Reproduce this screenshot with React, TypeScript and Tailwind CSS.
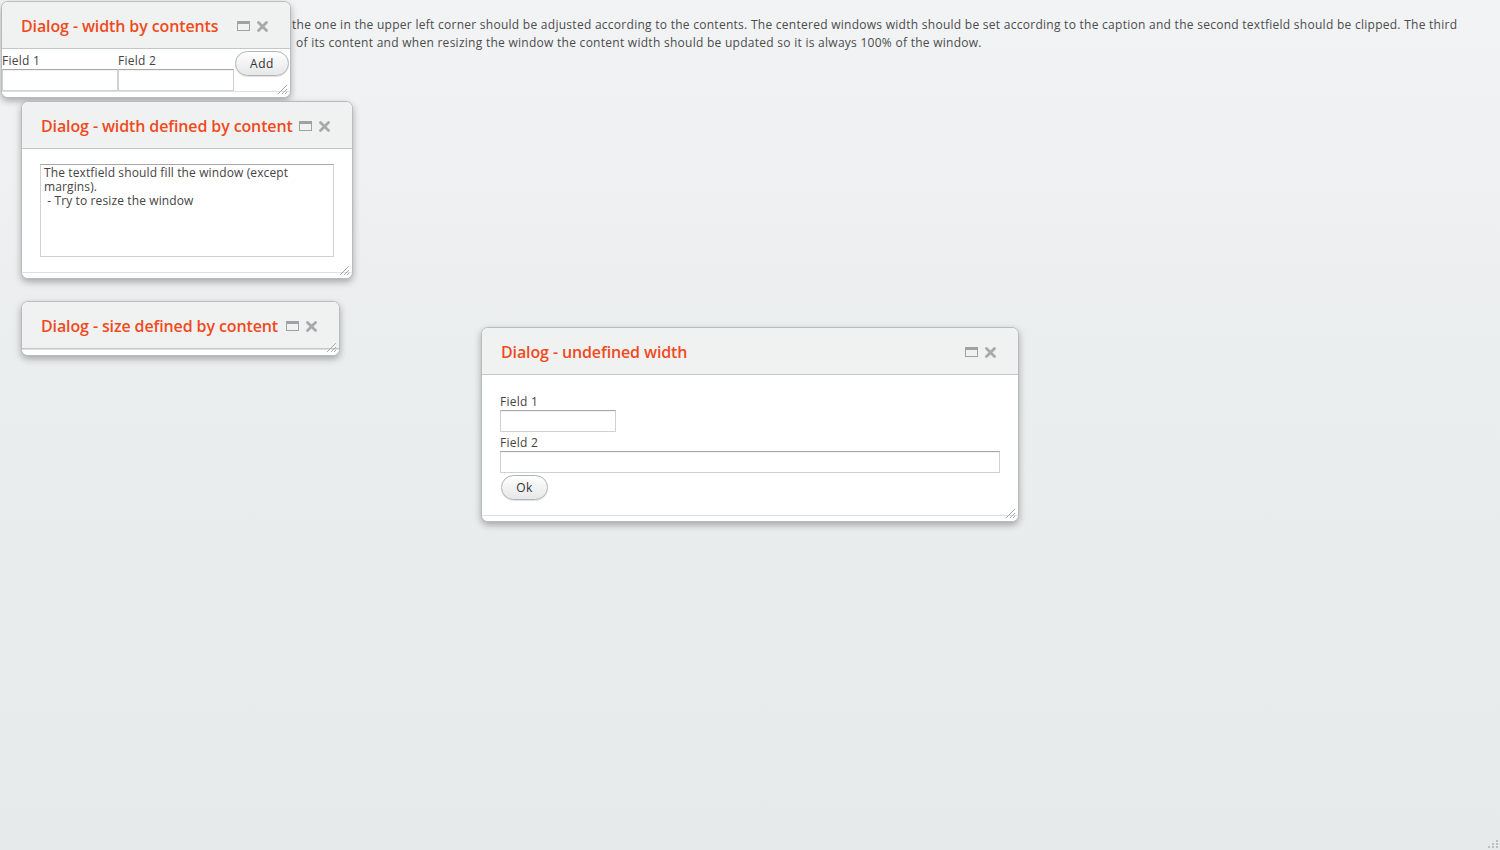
import React from "react";

const FONT = { fontFamily: '"Open Sans", "DejaVu Sans", sans-serif' };

function MaxIcon() {
  return (
    <svg width="13" height="10" viewBox="0 0 13 10" className="block">
      <rect x="0.5" y="0.5" width="12" height="9" fill="none" stroke="#9ea2a4" />
      <rect x="0" y="0" width="13" height="3" fill="#9ea2a4" />
    </svg>
  );
}

function CloseIcon() {
  return (
    <svg width="11" height="11" viewBox="0 0 11 11" className="block">
      <path d="M1.5 1.5 L9.5 9.5 M9.5 1.5 L1.5 9.5" stroke="#a6aaab" strokeWidth="2.8" strokeLinecap="round" />
    </svg>
  );
}

function ResizeHandle() {
  return (
    <svg width="11" height="11" viewBox="0 0 11 11" className="absolute right-[2px] bottom-[2px]">
      <path d="M10 1 L1 10 M10 5 L5 10 M10 8 L8 10" stroke="#a9adae" strokeWidth="1" />
    </svg>
  );
}

function Win({
  x,
  y,
  w,
  caption,
  children,
}: {
  x: number;
  y: number;
  w: number;
  caption: string;
  children?: React.ReactNode;
}) {
  return (
    <div
      className="absolute rounded-[7px] border border-[#b7bcbd] bg-white shadow-[0_3px_7px_rgba(0,0,0,0.3)] overflow-hidden"
      style={{ left: x, top: y, width: w }}
    >
      <div className="h-[47px] bg-[#f0f2f2] border-b border-[#c2c7c8] flex items-center pl-[19px] pr-[22px] pt-[2px]">
        <div className="flex-1 text-[16px] text-[#f04a1c] font-semibold whitespace-nowrap tracking-[-0.12px]">
          {caption}
        </div>
        <div className="flex items-center gap-[7px] pl-[6px]">
          <MaxIcon />
          <CloseIcon />
        </div>
      </div>
      {children}
      <div className="relative h-[6px] border-t border-[#dde0e1] bg-white">
        <ResizeHandle />
      </div>
    </div>
  );
}

const inputCls =
  "h-[22px] border border-[#cfd1d2] border-t-[#a6a8a9] bg-white shadow-[inset_0_1px_1px_rgba(0,0,0,0.06)]";

function Btn({ label, w }: { label: string; w: number }) {
  return (
    <div
      className="h-[25px] rounded-full border border-[#b0b3b4] bg-gradient-to-b from-white to-[#e6e7e8] flex items-center justify-center text-[12px] text-[#333] tracking-[0.5px] shadow-[0_1px_1px_rgba(0,0,0,0.12)]"
      style={{ width: w }}
    >
      {label}
    </div>
  );
}

export default function App() {
  return (
    <div
      className="relative w-[1500px] h-[850px] overflow-hidden bg-gradient-to-b from-[#f2f3f4] via-[#ebeeef] via-40% to-[#e7eaeb] text-[#444] text-[12px] tracking-[0.27px]"
      style={FONT}
    >
      <div className="pt-[16px] pl-[292px] leading-[18px] text-[#4a4c4d]">
        <div className="whitespace-nowrap">
          the one in the upper left corner should be adjusted according to the contents. The centered windows width should be set according to the caption and the second textfield should be clipped. The third
        </div>
        <div className="whitespace-nowrap pl-[4px]">
          of its content and when resizing the window the content width should be updated so it is always 100% of the window.
        </div>
      </div>

      <Win x={1} y={1} w={290} caption="Dialog - width by contents">
        <div className="flex h-[42px]">
          <div className="flex flex-col w-[116px]">
            <div className="h-[20px] pt-[4px] leading-[16px]">Field 1</div>
            <div className={inputCls + " w-[116px]"} />
          </div>
          <div className="flex flex-col w-[116px]">
            <div className="h-[20px] pt-[4px] leading-[16px]">Field 2</div>
            <div className={inputCls + " w-[116px]"} />
          </div>
          <div className="pl-[1px] pt-[2px]">
            <Btn label="Add" w={54} />
          </div>
        </div>
      </Win>

      <Win x={21} y={101} w={332} caption="Dialog - width defined by content">
        <div className="px-[18px] pt-[15px] pb-[15px]">
          <div className="h-[93px] border border-[#cfd1d2] border-t-[#a6a8a9] px-[3px] pt-[1px] leading-[14px] text-[12px] text-[#444] tracking-[0.12px]">
            The textfield should fill the window (except margins).
            <br />
            &nbsp;- Try to resize the window
          </div>
        </div>
      </Win>

      <Win x={21} y={301} w={319} caption="Dialog - size defined by content" />

      <Win x={481} y={327} w={538} caption="Dialog - undefined width">
        <div className="px-[18px] pt-[19px] pb-[15px]">
          <div className="leading-[16px] h-[16px]">Field 1</div>
          <div className={inputCls + " w-[116px]"} />
          <div className="leading-[16px] h-[19px] pt-[3px]">Field 2</div>
          <div className={inputCls + " w-full"} />
          <div className="pt-[2px] pl-[1px]">
            <Btn label="Ok" w={47} />
          </div>
        </div>
      </Win>

      <svg width="12" height="12" viewBox="0 0 12 12" className="absolute right-[1px] bottom-[1px]">
        <rect x="9" y="3" width="2" height="2" fill="#b9bebf" />
        <rect x="5" y="6" width="2" height="2" fill="#b9bebf" />
        <rect x="9" y="6" width="2" height="2" fill="#b9bebf" />
        <rect x="1" y="9" width="2" height="2" fill="#b9bebf" />
        <rect x="5" y="9" width="2" height="2" fill="#b9bebf" />
        <rect x="9" y="9" width="2" height="2" fill="#b9bebf" />
      </svg>
    </div>
  );
}
